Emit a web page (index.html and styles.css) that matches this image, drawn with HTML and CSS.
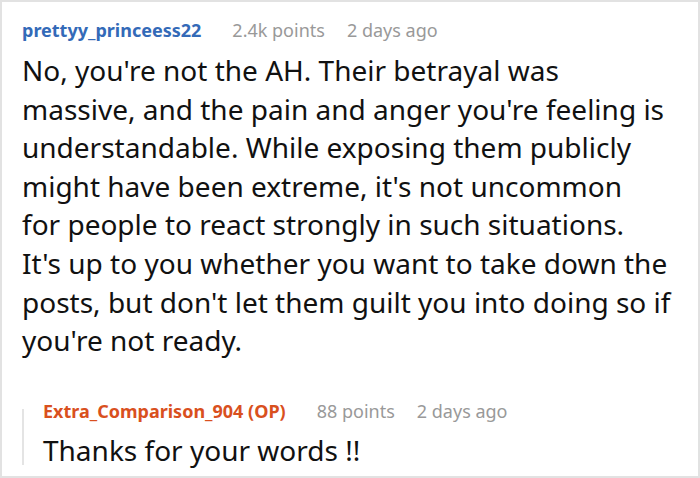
FILE: index.html
```html
<!DOCTYPE html>
<html lang="en">
<head>
  <meta charset="UTF-8">
  <title>Comment</title>
  <link rel="stylesheet" href="styles.css">
</head>
<body>
  <div class="card">
    <div class="comment">
      <div class="meta">
        <span class="author">prettyy_princeess22</span>
        <span class="info">2.4k points</span>
        <span class="info">2 days ago</span>
      </div>
      <p class="text">No, you're not the AH. Their betrayal was<br>
        massive, and the pain and anger you're feeling is<br>
        understandable. While exposing them publicly<br>
        might have been extreme, it's not uncommon<br>
        for people to react strongly in such situations.<br>
        It's up to you whether you want to take down the<br>
        posts, but don't let them guilt you into doing so if<br>
        you're not ready.</p>
    </div>
    <div class="reply">
      <div class="meta">
        <span class="author op">Extra_Comparison_904 (OP)</span>
        <span class="info">88 points</span>
        <span class="info">2 days ago</span>
      </div>
      <p class="text">Thanks for your words !!</p>
    </div>
  </div>
</body>
</html>
```

FILE: styles.css
```css
body {
  margin: 0;
  font-family: 'Noto Sans', 'Open Sans', Arial, sans-serif;
  background: #ffffff;
  color: #111111;
}

.card {
  width: 700px;
  height: 478px;
  box-sizing: border-box;
  border: 2px solid #e2e2e2;
  padding: 14px 10px 0 20px;
  overflow: hidden;
}

.meta {
  display: flex;
  gap: 22px;
  font-size: 18px;
  line-height: 28px;
}

.author {
  color: #336ab8;
  font-weight: bold;
  margin-right: 9px;
}

.author.op {
  color: #d9501e;
}

.info {
  color: #999999;
}

.text {
  margin: 7px 0 0 0;
  font-size: 28px;
  line-height: 38.6px;
  white-space: nowrap;
}

.reply {
  position: relative;
  margin-top: 37px;
  padding-left: 21px;
}

.reply::before {
  content: "";
  position: absolute;
  left: 0;
  top: 12px;
  bottom: 4px;
  border-left: 2px solid #e4e4e4;
}

.reply .text {
  margin-top: 6px;
}
```
